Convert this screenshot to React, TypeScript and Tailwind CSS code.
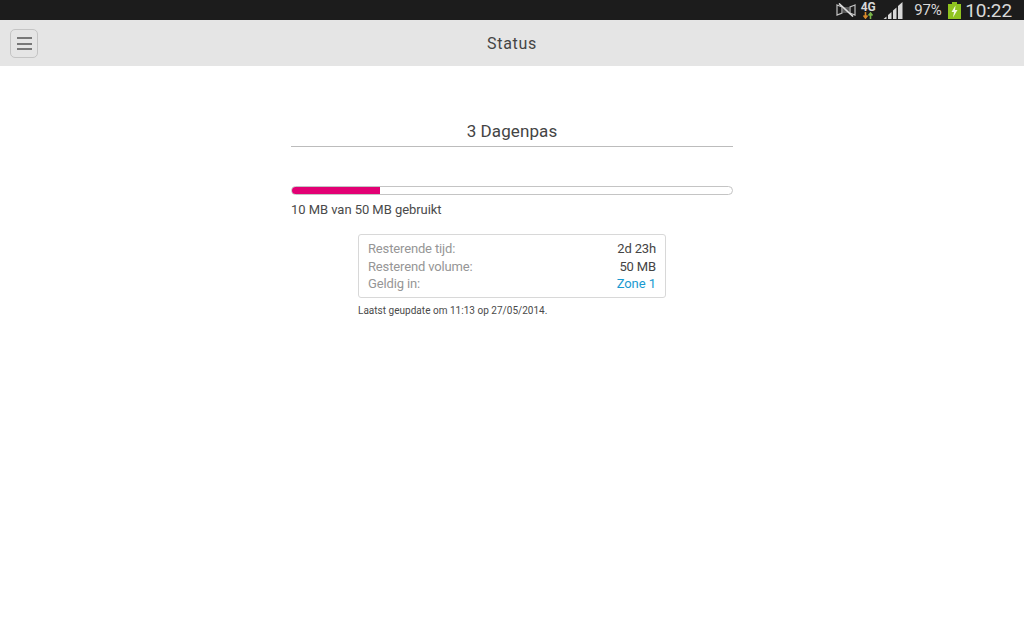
const font = { fontFamily: "Roboto, sans-serif" };

function StatusBar() {
  return (
    <div className="h-5 bg-[#1c1c1c] flex items-center justify-end text-[#d8d8d8]" style={font}>
      {/* muted / vibrate off */}
      <svg width="20" height="14" viewBox="0 0 20 14" className="mr-[4px]">
        <path d="M1 2 L6 4 V10 L1 12 Z M19 2 L14 4 V10 L19 12 Z" fill="none" stroke="#c0c0c0" strokeWidth="1.2" />
        <path d="M8 4 V10 M10 4 V10 M12 4 V10" stroke="#8c8c8c" strokeWidth="1.1" />
        <path d="M3 0.5 L17 13.5" stroke="#e0e0e0" strokeWidth="1.6" />
      </svg>
      {/* 4G */}
      <div className="w-[16px] mr-[7px] flex flex-col items-center leading-none">
        <span className="text-[12px] font-bold leading-[10px] h-[10px]">4G</span>
        <svg width="12" height="7" viewBox="0 0 12 7">
          <path d="M3.5 0 V5 M1.5 3.5 L3.5 6 L5.5 3.5" stroke="#d98a2b" strokeWidth="1.6" fill="none" />
          <path d="M8.5 7 V1.5 M6.5 3.5 L8.5 1 L10.5 3.5" stroke="#7ab648" strokeWidth="1.6" fill="none" />
        </svg>
      </div>
      {/* signal */}
      <svg width="20" height="17" viewBox="0 0 20 17" className="mr-[11px]">
        <path d="M0.5 17 L3.5 14.5 V17 Z M5 17 V13 L8.5 10 V17 Z M10 17 V8.5 L13.5 5.5 V17 Z M15 17 V4 L19.5 0 V17 Z" fill="#d8d8d8" />
      </svg>
      <span className="text-[15px] leading-5 w-[29px] tracking-[-0.2px]">97%</span>
      {/* battery */}
      <svg width="13" height="17" viewBox="0 0 13 17" className="ml-[5px] mr-[4px] mt-[1px]">
        <rect x="4" y="0" width="5" height="2" fill="#8fc31f" />
        <rect x="0" y="2" width="13" height="15" fill="#8fc31f" />
        <path d="M7.5 3.5 L3.5 10 H6 L5 15.5 L9.5 8 H7 Z" fill="#f4f8e4" />
      </svg>
      <span className="text-[19px] leading-5 mt-[1px] mr-3 tracking-[-0.1px]">10:22</span>
    </div>
  );
}

function Row({ label, value, blue }: { label: string; value: string; blue?: boolean }) {
  return (
    <div className="h-[17.5px] flex items-center justify-between">
      <span className="text-[#969696] tracking-[-0.15px]">{label}</span>
      <span className={blue ? "text-[#1a9ad0] tracking-[-0.05px]" : "text-[#444444] tracking-[-0.15px]"}>{value}</span>
    </div>
  );
}

export default function App() {
  return (
    <div className="h-[640px] bg-white overflow-hidden" style={font}>
      <StatusBar />
      <header className="h-[46px] bg-[#e5e5e5] flex items-center justify-center relative">
        <button className="absolute left-[10px] top-[9px] w-[28px] h-[29px] border border-[#c4c4c4] rounded-[5px] flex flex-col items-center justify-center gap-[3.5px]">
          <span className="w-[15px] h-[2px] bg-[#787878]" />
          <span className="w-[15px] h-[2px] bg-[#787878]" />
          <span className="w-[15px] h-[2px] bg-[#787878]" />
        </button>
        <span className="text-[16px] leading-[24px] mt-[2px] text-[#444444] tracking-[0.7px]">Status</span>
      </header>

      <main className="w-[442px] mx-auto pt-[54px]">
        <h1 className="h-[26px] border-b border-[#bcbcbc] box-content text-center text-[17px] leading-[22px] text-[#444444] tracking-[0.1px]">3 Dagenpas</h1>

        <div className="mt-[39px] h-[9px] border border-[#c4c4c4] rounded-full overflow-hidden bg-white">
          <div className="h-full bg-[#e20074]" style={{ width: "20%" }} />
        </div>
        <p className="mt-[6px] text-[13px] leading-[18px] text-[#4a4a4a] tracking-[-0.05px]">10 MB van 50 MB gebruikt</p>

        <div className="w-[308px] mx-auto mt-[15px]">
          <div className="h-[64px] border border-[#d8d8d8] rounded-[3px] px-[9px] py-[5px] text-[13px]">
            <Row label="Resterende tijd:" value="2d 23h" />
            <Row label="Resterend volume:" value="50 MB" />
            <Row label="Geldig in:" value="Zone 1" blue />
          </div>
          <p className="mt-[6px] text-[10px] leading-[14px] text-[#4a4a4a] tracking-[0.02px]">Laatst geupdate om 11:13 op 27/05/2014.</p>
        </div>
      </main>
    </div>
  );
}
